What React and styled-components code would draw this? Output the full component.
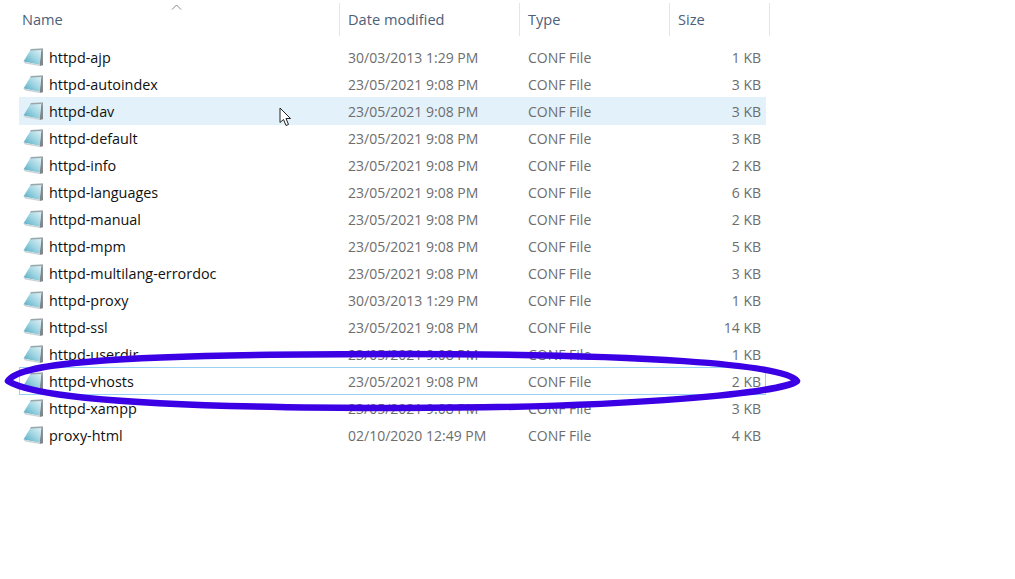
import React from "react";
import styled, { createGlobalStyle } from "styled-components";

const files = [
  ["httpd-ajp", "30/03/2013 1:29 PM", "1 KB"],
  ["httpd-autoindex", "23/05/2021 9:08 PM", "3 KB"],
  ["httpd-dav", "23/05/2021 9:08 PM", "3 KB", "hover"],
  ["httpd-default", "23/05/2021 9:08 PM", "3 KB"],
  ["httpd-info", "23/05/2021 9:08 PM", "2 KB"],
  ["httpd-languages", "23/05/2021 9:08 PM", "6 KB"],
  ["httpd-manual", "23/05/2021 9:08 PM", "2 KB"],
  ["httpd-mpm", "23/05/2021 9:08 PM", "5 KB"],
  ["httpd-multilang-errordoc", "23/05/2021 9:08 PM", "3 KB"],
  ["httpd-proxy", "30/03/2013 1:29 PM", "1 KB"],
  ["httpd-ssl", "23/05/2021 9:08 PM", "14 KB"],
  ["httpd-userdir", "23/05/2021 9:08 PM", "1 KB"],
  ["httpd-vhosts", "23/05/2021 9:08 PM", "2 KB", "focus"],
  ["httpd-xampp", "23/05/2021 9:08 PM", "3 KB"],
  ["proxy-html", "02/10/2020 12:49 PM", "4 KB"],
];

const GlobalStyle = createGlobalStyle`
  html, body {
    margin: 0;
    background: #fff;
  }
  body {
    font-family: "Open Sans", "Noto Sans", sans-serif;
    font-size: 14px;
  }
`;

const Page = styled.div`
  position: relative;
  width: 1015px;
  height: 579px;
  overflow: hidden;
  background: #fff;
`;

const Header = styled.div`
  display: grid;
  grid-template-columns: 321px 180px 150px 100px;
  height: 33px;
  margin: 3px 0 8px 19px;
  width: 752px;
`;

const HeaderCell = styled.div`
  position: relative;
  padding: 0 0 0 ${(p) => (p.$first ? "3px" : "8px")};
  border-right: 1px solid #e5e5e5;
  color: #4c607a;
  font-size: 14.6px;
  line-height: 33px;
`;

const SortArrow = styled.svg`
  position: absolute;
  left: 152px;
  top: 0;
`;

const Rows = styled.div`
  display: flex;
  flex-direction: column;
  margin-left: 19px;
  width: 747px;
`;

const Row = styled.div`
  display: grid;
  grid-template-columns: 321px 180px 150px 96px;
  box-sizing: border-box;
  height: ${(p) => (p.$state ? "28px" : "27px")};
  margin-top: ${(p) => (p.$state ? "-1px" : "0")};
  line-height: ${(p) => (p.$state ? "28px" : "26px")};
  background: ${(p) => (p.$state === "hover" ? "#e3f1fb" : "transparent")};
  border: 1px solid ${(p) => (p.$state === "focus" ? "#99d1f5" : "transparent")};
`;

const NameCell = styled.div`
  display: flex;
  align-items: center;
  gap: 5px;
  padding-left: 3px;
  color: #111;
  font-size: 14.4px;
`;

const FileIcon = styled.svg`
  margin-bottom: 2px;
`;

const MutedCell = styled.div`
  padding-left: 7px;
  color: #6d6d6d;
  white-space: nowrap;
`;

const SizeCell = styled(MutedCell)`
  padding: 0 6px 0 0;
  text-align: right;
`;

const Annotation = styled.svg`
  position: absolute;
  left: 0;
  top: 340px;
  pointer-events: none;
`;

const Cursor = styled.svg`
  position: absolute;
  left: 279px;
  top: 107px;
`;

const NoteIcon = () => (
  <FileIcon width="21" height="19" viewBox="0 0 21 19">
    <defs>
      <linearGradient id="note" x1="0" y1="1" x2="1" y2="0">
        <stop offset="0" stopColor="#4fa6bf" />
        <stop offset="0.5" stopColor="#9dd4e2" />
        <stop offset="1" stopColor="#e6f4f7" />
      </linearGradient>
    </defs>
    <path d="M18 0.5 L19.8 0.5 L20 17.2 L16.5 18 Z" fill="#7f8588" />
    <path d="M8 1 L18.6 0.5 L16.8 16.8 L0.5 13.5 Z" fill="url(#note)" />
    <path d="M8 1 L18.6 0.5 L18.4 2 L7 2.6 Z" fill="#9aa6aa" />
    <path d="M0.5 13.5 L16.8 16.8 L16.5 18 L2 15.4 Z" fill="#ccd4d7" />
  </FileIcon>
);

const App = () => {
  return (
    <Page>
      <GlobalStyle />
      <Header>
        <HeaderCell $first>
          Name
          <SortArrow width="12" height="10" viewBox="0 0 12 10">
            <path d="M1 6.5 L5.5 2 L10 6.5" fill="none" stroke="#8a8a8a" strokeWidth="1" />
          </SortArrow>
        </HeaderCell>
        <HeaderCell>Date modified</HeaderCell>
        <HeaderCell>Type</HeaderCell>
        <HeaderCell>Size</HeaderCell>
      </Header>
      <Rows>
        {files.map(([name, date, size, state]) => (
          <Row key={name} $state={state}>
            <NameCell>
              <NoteIcon />
              {name}
            </NameCell>
            <MutedCell>{date}</MutedCell>
            <MutedCell>CONF File</MutedCell>
            <SizeCell>{size}</SizeCell>
          </Row>
        ))}
      </Rows>
      <Annotation width="820" height="80" viewBox="0 340 820 80">
        <path
          d="M8 381 C18 365 90 354 400 354 C640 354 785 364 797 381 C785 392 640 408 400 408 C110 408 28 394 8 381 Z"
          fill="none"
          stroke="#3c00e4"
          strokeWidth="6.5"
          strokeLinejoin="round"
        />
      </Annotation>
      <Cursor width="14" height="20" viewBox="0 0 14 20">
        <path d="M1 1 L1 15.5 L4.5 12.5 L7 18.5 L9.5 17.5 L7 11.5 L11.5 11.5 Z" fill="#fff" stroke="#222" strokeWidth="1" />
      </Cursor>
    </Page>
  );
};

export default App;
